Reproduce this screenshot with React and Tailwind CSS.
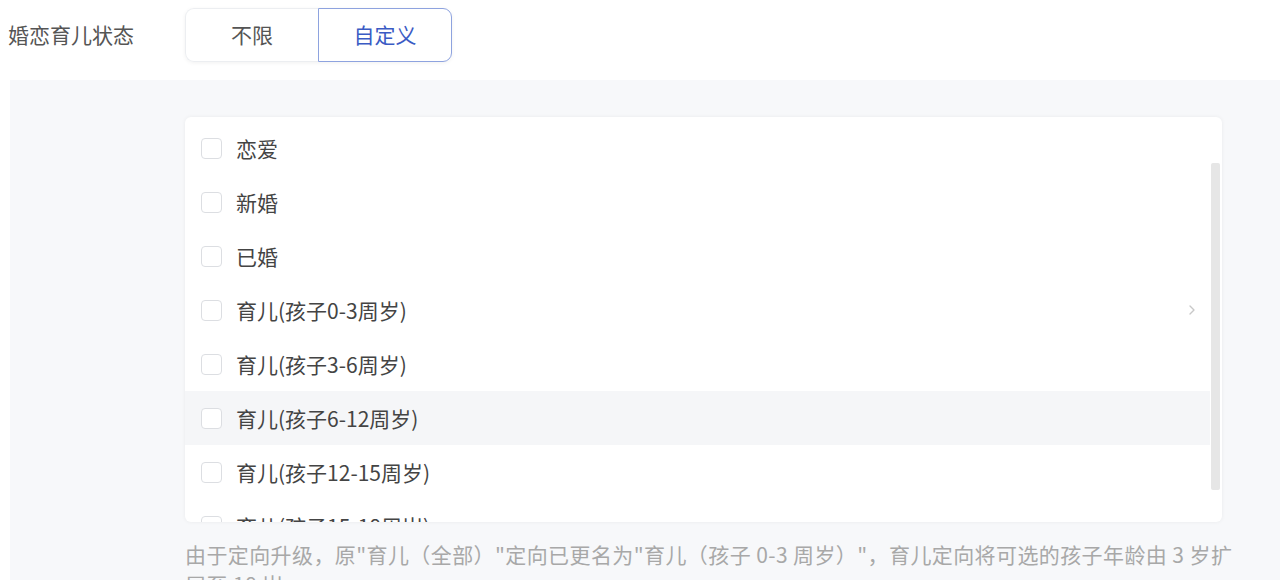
import { ChevronRight } from 'lucide-react';

const options = [
  '恋爱',
  '新婚',
  '已婚',
  '育儿(孩子0-3周岁)',
  '育儿(孩子3-6周岁)',
  '育儿(孩子6-12周岁)',
  '育儿(孩子12-15周岁)',
  '育儿(孩子15-18周岁)',
];

function OptionRow({ label, hovered, expandable }) {
  return (
    <div
      className={`h-[54px] flex items-center pl-[16px] pr-[10px] ${
        hovered ? 'bg-[#f5f6f8]' : ''
      }`}
    >
      <span className="w-[21px] h-[21px] rounded-[4px] border border-[#dcdee2] bg-white shrink-0" />
      <span className="ml-[14px] text-[21px] text-[#444] leading-none">
        {label}
      </span>
      {expandable && (
        <ChevronRight className="ml-auto w-[16px] h-[16px] text-[#c8c8c8]" strokeWidth={2} />
      )}
    </div>
  );
}

export default function App() {
  return (
    <div
      className="w-[1280px] h-[580px] overflow-hidden bg-white"
      style={{ fontFamily: '"Noto Sans CJK SC", "Noto Sans", sans-serif' }}
    >
      <div className="flex items-center h-[70px] pl-[8px]">
        <span className="w-[177px] text-[21px] text-[#555]">婚恋育儿状态</span>
        <div className="flex h-[54px] rounded-[9px] shadow-[0_1px_4px_rgba(0,0,0,0.06)]">
          <button className="w-[133px] h-full rounded-l-[9px] border border-[#eceef1] border-r-0 bg-white text-[21px] text-[#555]">
            不限
          </button>
          <button className="w-[134px] h-full rounded-r-[9px] border border-[#8ea3df] bg-white text-[21px] text-[#3a5bc4]">
            自定义
          </button>
        </div>
      </div>

      <div className="ml-[10px] mt-[10px] h-[500px] bg-[#f7f8fa] pl-[175px] pr-[58px] pt-[37px]">
        <div className="relative h-[405px] rounded-[6px] bg-white shadow-[0_0_4px_rgba(0,0,0,0.06)] overflow-hidden">
          <div className="pt-[4px] pr-[12px]">
            {options.map((label, i) => (
              <OptionRow
                key={label}
                label={label}
                hovered={i === 5}
                expandable={i === 3}
              />
            ))}
          </div>
          <div className="absolute right-[2px] top-[46px] w-[9px] h-[327px] rounded-[2px] bg-[#e6e6e6]" />
        </div>
        <p className="mt-[17px] text-[21px] leading-[30px] tracking-[0.4px] text-[#a8a8a8] whitespace-nowrap">
          由于定向升级，原"育儿（全部）"定向已更名为"育儿（孩子 0-3 周岁）"，育儿定向将可选的孩子年龄由 3 岁扩
          <br />
          展至 18 岁
        </p>
      </div>
    </div>
  );
}
